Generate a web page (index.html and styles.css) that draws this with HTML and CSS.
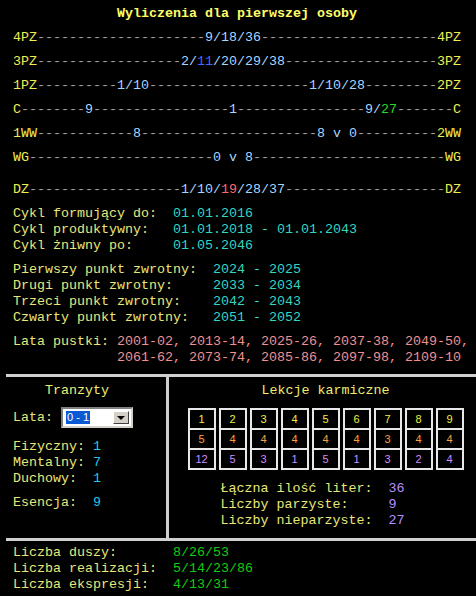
FILE: index.html
```html
<!DOCTYPE html>
<html lang="pl">
<head>
<meta charset="UTF-8" />
<title>Wyliczenia dla pierwszej osoby</title>
<link rel="stylesheet" href="styles.css">
</head>
<body>
  <main class="sheet">
    <h1 class="title">Wyliczenia dla pierwszej osoby</h1>

    <!-- Wykres punktów -->
    <div class="chart">
      <div class="line"><span class="tag">4PZ</span><span class="dash">---------------------</span><span class="val">9/18/36</span><span class="dash">----------------------</span><span class="tag">4PZ</span></div>
      <div class="line"><span class="tag">3PZ</span><span class="dash">------------------</span><span class="val">2/<span class="blue">11</span>/20/29/38</span><span class="dash">-------------------</span><span class="tag">3PZ</span></div>
      <div class="line"><span class="tag">1PZ</span><span class="dash">----------</span><span class="val">1/10</span><span class="dash">--------------------</span><span class="val">1/10/28</span><span class="dash">---------</span><span class="tag">2PZ</span></div>
      <div class="line"><span class="tag">C</span><span class="dash">--------</span><span class="val">9</span><span class="dash">-----------------</span><span class="val">1</span><span class="dash">----------------</span><span class="val">9/<span class="green">27</span></span><span class="dash">-------</span><span class="tag">C</span></div>
      <div class="line"><span class="tag">1WW</span><span class="dash">------------</span><span class="val">8</span><span class="dash">----------------------</span><span class="val">8 v 0</span><span class="dash">----------</span><span class="tag">2WW</span></div>
      <div class="line"><span class="tag">WG</span><span class="dash">-----------------------</span><span class="val">0 v 8</span><span class="dash">------------------------</span><span class="tag">WG</span></div>
      <div class="line line-sep"><span class="tag">DZ</span><span class="dash">-------------------</span><span class="val">1/10/<span class="red">19</span>/28/37</span><span class="dash">--------------------</span><span class="tag">DZ</span></div>
    </div>

    <!-- Cykle -->
    <div class="pairs cycles">
      <span class="key">Cykl formujący do:</span><span class="teal">01.01.2016</span>
      <span class="key">Cykl produktywny:</span><span class="teal">01.01.2018 - 01.01.2043</span>
      <span class="key">Cykl żniwny po:</span><span class="teal">01.05.2046</span>
    </div>

    <div class="pairs points">
      <span class="key">Pierwszy punkt zwrotny:</span><span class="teal">2024 - 2025</span>
      <span class="key">Drugi punkt zwrotny:</span><span class="teal">2033 - 2034</span>
      <span class="key">Trzeci punkt zwrotny:</span><span class="teal">2042 - 2043</span>
      <span class="key">Czwarty punkt zwrotny:</span><span class="teal">2051 - 2052</span>
    </div>

    <div class="pairs void">
      <span class="key">Lata pustki:</span>
      <span class="coral">2001-02, 2013-14, 2025-26, 2037-38, 2049-50,<br>2061-62, 2073-74, 2085-86, 2097-98, 2109-10</span>
    </div>

    <section class="split">
      <div class="transits">
        <h2 class="panel-title">Tranzyty</h2>
        <div class="years">
          <span class="key">Lata:</span>
          <div class="select">
            <span class="select-text"><span class="picked">0 - 1</span></span>
            <span class="select-btn"><span class="arrow"></span></span>
          </div>
        </div>
        <div class="pairs bodies">
          <span class="key">Fizyczny:</span><span class="cyan">1</span>
          <span class="key">Mentalny:</span><span class="cyan">7</span>
          <span class="key">Duchowy:</span><span class="cyan">1</span>
        </div>
        <div class="pairs essence">
          <span class="key">Esencja:</span><span class="cyan">9</span>
        </div>
      </div>

      <div class="karma">
        <h2 class="panel-title">Lekcje karmiczne</h2>
        <div class="karma-inner">
          <div class="lessons">
            <div class="col"><span class="c1">1</span><span class="c2">5</span><span class="c3">12</span></div>
            <div class="col"><span class="c1">2</span><span class="c2">4</span><span class="c3">5</span></div>
            <div class="col"><span class="c1">3</span><span class="c2">4</span><span class="c3">3</span></div>
            <div class="col"><span class="c1">4</span><span class="c2">4</span><span class="c3">1</span></div>
            <div class="col"><span class="c1">5</span><span class="c2">4</span><span class="c3">5</span></div>
            <div class="col"><span class="c1">6</span><span class="c2">4</span><span class="c3">1</span></div>
            <div class="col"><span class="c1">7</span><span class="c2">3</span><span class="c3">3</span></div>
            <div class="col"><span class="c1">8</span><span class="c2">4</span><span class="c3">2</span></div>
            <div class="col"><span class="c1">9</span><span class="c2">4</span><span class="c3">4</span></div>
          </div>
          <div class="pairs summary">
            <span class="key">Łączna ilość liter:</span><span class="violet">36</span>
            <span class="key">Liczby parzyste:</span><span class="violet">9</span>
            <span class="key">Liczby nieparzyste:</span><span class="violet">27</span>
          </div>
        </div>
      </div>
    </section>

    <div class="pairs numbers">
      <span class="key">Liczba duszy:</span><span class="lime">8/26/53</span>
      <span class="key">Liczba realizacji:</span><span class="lime">5/14/23/86</span>
      <span class="key">Liczba ekspresji:</span><span class="lime">4/13/31</span>
    </div>
  </main>
</body>
</html>
```

FILE: styles.css
```css
* {
  box-sizing: border-box;
}
html, body {
  margin: 0;
  padding: 0;
  background: #000;
}

.sheet {
  font-family: "Liberation Mono", "Courier New", monospace;
  font-size: 10pt;
  line-height: 16px;
  color: #e8e878;
  padding: 6px 0 0 13px;
  overflow: hidden;
}

/* Title */
.title {
  margin: 0;
  width: 448px;
  font-size: 10pt;
  font-weight: bold;
  text-align: center;
  color: #ffff66;
}

/* Chart lines */
.line {
  margin-top: 8px;
  white-space: pre;
}
.line-sep {
  margin-top: 16px;
}
.tag { color: #eeee50; }
.dash { color: #a0a0a0; }
.val { color: #a8d4ff; }
.blue { color: #4466ff; }
.green { color: #22dd22; }
.red { color: #ff6a6a; }

/* Label / value pairs */
.pairs {
  display: grid;
  grid-template-columns: 20ch auto;
}
.pairs span {
  white-space: pre;
}
.key { color: #e8e878; }
.teal { color: #33d6c0; }
.coral { color: #f09090; }
.cyan { color: #1ec8ea; }
.violet { color: #b890ff; }
.lime { color: #10cc10; }

.cycles { margin-top: 8px; }
.points {
  margin-top: 8px;
  grid-template-columns: 25ch auto;
}
.void {
  margin-top: 8px;
  grid-template-columns: 13ch auto;
}

/* Transits and karmic lessons */
.split {
  display: flex;
  margin: 8px 0 0 -7px;
  border-top: 3px solid #cfcfcf;
  border-bottom: 3px solid #cfcfcf;
}
.panel-title {
  margin: 0;
  font-size: 10pt;
  font-weight: normal;
  text-align: center;
  color: #eeee70;
}

.transits {
  width: 163px;
  padding: 6px 0 0 7px;
  border-right: 3px solid #cfcfcf;
}
.transits .panel-title {
  width: 16ch;
}
.years {
  display: flex;
  align-items: center;
  margin-top: 8px;
  white-space: pre;
}
.years .key {
  width: 6ch;
}
.select {
  display: flex;
  width: 72px;
  height: 21px;
  padding: 2px;
  background: #fff;
  border: 2px solid #d4d0c8;
  border-top-color: #808080;
  border-left-color: #808080;
}
.select-text {
  flex: 1;
  display: flex;
  align-items: center;
  padding-left: 1px;
}
.picked {
  font-family: "Liberation Sans", Arial, sans-serif;
  font-size: 11px;
  line-height: 13px;
  padding: 0 1px;
  background: #0a5ad6;
  color: #fff;
}
.select-btn {
  width: 16px;
  display: flex;
  align-items: center;
  justify-content: center;
  background: #d4d0c8;
  border: 1px solid #fff;
  border-right-color: #404040;
  border-bottom-color: #404040;
}
.arrow {
  width: 0;
  height: 0;
  border-left: 4px solid transparent;
  border-right: 4px solid transparent;
  border-top: 4px solid #000;
}
.bodies {
  margin-top: 11px;
  grid-template-columns: 10ch auto;
}
.essence {
  margin-top: 8px;
  grid-template-columns: 10ch auto;
}

.karma {
  flex: 1;
  padding: 6px 0 9px 6px;
}
.karma-inner {
  width: 276px;
  margin: 0 auto;
}
.lessons {
  display: flex;
  gap: 3px;
  margin-top: 9px;
}
.col {
  display: flex;
  flex-direction: column;
  width: 28px;
  border: 1px solid #e8e8e8;
}
.col span {
  height: 20px;
  display: flex;
  align-items: center;
  justify-content: center;
  border: 1px solid #e8e8e8;
  font-family: "Liberation Sans", Arial, sans-serif;
  font-size: 11px;
}
.c1 { color: #f0f040; }
.c2 { color: #ffa040; }
.c3 { color: #d48cff; }

.summary {
  margin: 11px 0 0 33px;
  grid-template-columns: 21ch auto;
}

.numbers {
  margin-top: 4px;
  padding-bottom: 6px;
}
```
